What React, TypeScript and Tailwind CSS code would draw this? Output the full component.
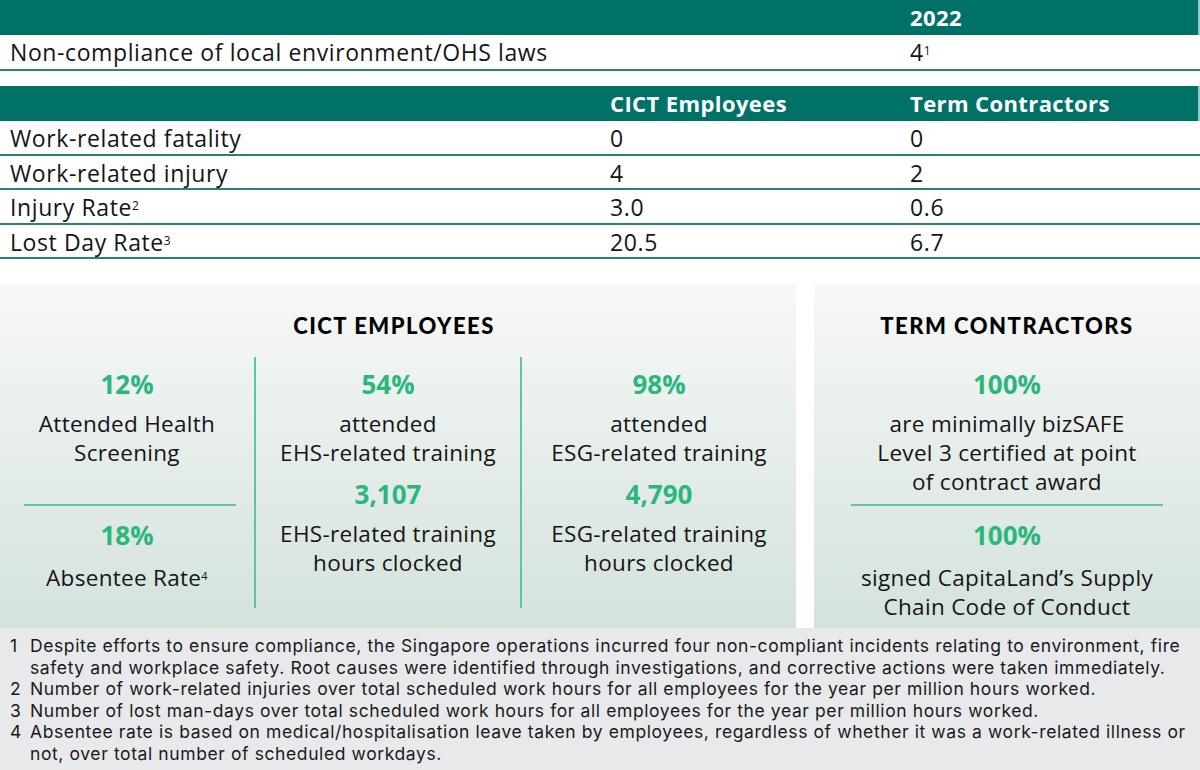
import React from 'react';

const teal = 'bg-[#007167]';

const rows = [
  { label: 'Work-related fatality', sup: '', a: '0', b: '0' },
  { label: 'Work-related injury', sup: '', a: '4', b: '2' },
  { label: 'Injury Rate', sup: '2', a: '3.0', b: '0.6' },
  { label: 'Lost Day Rate', sup: '3', a: '20.5', b: '6.7' },
];

const notes = [
  {
    n: '1',
    t: 'Despite efforts to ensure compliance, the Singapore operations incurred four non-compliant incidents relating to environment, fire safety and workplace safety. Root causes were identified through investigations, and corrective actions were taken immediately.',
  },
  { n: '2', t: 'Number of work-related injuries over total scheduled work hours for all employees for the year per million hours worked.' },
  { n: '3', t: 'Number of lost man-days over total scheduled work hours for all employees for the year per million hours worked.' },
  {
    n: '4',
    t: 'Absentee rate is based on medical/hospitalisation leave taken by employees, regardless of whether it was a work-related illness or not, over total number of scheduled workdays.',
  },
];

const Stat: React.FC<{ value: string; children: React.ReactNode }> = ({ value, children }) => (
  <div className="flex flex-col items-center text-center">
    <div className="text-[26px] leading-[30px] font-bold text-[#2bb77b]">{value}</div>
    <div className="mt-[9.5px] text-[22.5px] leading-[29px] tracking-[0.3px] text-[#151515]">{children}</div>
  </div>
);

const App: React.FC = () => {
  return (
    <div className="w-[1200px] h-[770px] overflow-hidden bg-white text-[#151515] font-['Open_Sans',sans-serif]">
      {/* compliance table */}
      <div className={`grid grid-cols-[600px_300px_1fr] h-[35px] items-center ${teal} text-white font-bold text-[22px] tracking-[0.4px] border-r-2 border-[#9fc6c2]`}>
        <div />
        <div />
        <div className="pl-[10px]">2022</div>
      </div>
      <div className="grid grid-cols-[600px_300px_1fr] h-[36px] items-center text-[23px] tracking-[0.6px] border-b-2 border-[#2b807a]">
        <div className="pl-[10px]">Non-compliance of local environment/OHS laws</div>
        <div />
        <div className="pl-[10px]">
          4<sup className="text-[12px]">1</sup>
        </div>
      </div>

      {/* safety table */}
      <div className={`mt-[15px] grid grid-cols-[600px_300px_1fr] h-[35px] items-center ${teal} text-white font-bold text-[22px] tracking-[0.4px] border-r-2 border-[#9fc6c2]`}>
        <div />
        <div className="pl-[10px]">CICT Employees</div>
        <div className="pl-[10px]">Term Contractors</div>
      </div>
      {rows.map((r) => (
        <div key={r.label} className="grid grid-cols-[600px_300px_1fr] h-[34.5px] items-center text-[23px] tracking-[0.6px] border-b-2 border-[#2b807a]">
          <div className="pl-[10px]">
            {r.label}
            {r.sup && <sup className="text-[12px]">{r.sup}</sup>}
          </div>
          <div className="pl-[10px]">{r.a}</div>
          <div className="pl-[10px]">{r.b}</div>
        </div>
      ))}

      {/* highlight panels */}
      <div className="mt-[24px] flex h-[345px] gap-[18px]">
        <div className="w-[796px] bg-gradient-to-b from-[#f7f8f7] to-[#d4e2dc] pt-[30px]">
          <h3 className="pr-[8px] text-center font-['Lato',sans-serif] font-black text-[22px] leading-[26px] tracking-[1.5px] text-black">CICT EMPLOYEES</h3>
          <div className="mt-[18px] grid grid-cols-[254px_266px_1fr]">
            <div className="flex flex-col">
              <div className="h-[147px] pt-[12px]">
                <Stat value="12%">
                  Attended Health
                  <br />
                  Screening
                </Stat>
              </div>
              <div className="ml-[24px] mr-[18px] h-[2px] bg-[#5fc796]" />
              <div className="pt-[14px]">
                <Stat value="18%">
                  <span className="inline-block mt-[3px]">
                    Absentee Rate<sup className="text-[11px]">4</sup>
                  </span>
                </Stat>
              </div>
            </div>
            <div className="border-l-2 border-[#5fc796] h-[251px] pt-[12px] flex flex-col gap-[12.5px]">
              <Stat value="54%">
                attended
                <br />
                EHS-related training
              </Stat>
              <Stat value="3,107">
                EHS-related training
                <br />
                hours clocked
              </Stat>
            </div>
            <div className="border-l-2 border-[#5fc796] h-[251px] pt-[12px] flex flex-col gap-[12.5px]">
              <Stat value="98%">
                attended
                <br />
                ESG-related training
              </Stat>
              <Stat value="4,790">
                ESG-related training
                <br />
                hours clocked
              </Stat>
            </div>
          </div>
        </div>
        <div className="flex-1 bg-gradient-to-b from-[#f7f8f7] to-[#d4e2dc] pt-[30px]">
          <h3 className="text-center font-['Lato',sans-serif] font-black text-[22px] leading-[26px] tracking-[1.5px] text-black">TERM CONTRACTORS</h3>
          <div className="mt-[30px]">
            <Stat value="100%">
              are minimally bizSAFE
              <br />
              Level 3 certified at point
              <br />
              of contract award
            </Stat>
          </div>
          <div className="mt-[8.5px] ml-[37px] mr-[37px] h-[2px] bg-[#5fc796]" />
          <div className="mt-[14px]">
            <Stat value="100%">
              <span className="inline-block mt-[3px]">
                signed CapitaLand’s Supply
                <br />
                Chain Code of Conduct
              </span>
            </Stat>
          </div>
        </div>
      </div>

      {/* footnotes */}
      <div className="bg-[#e8e9ea] h-[142px] pt-[7px] font-['Inter',sans-serif] text-[17.5px] leading-[21.5px] tracking-[0.6px] text-[#1a1a1a]">
        {notes.map((f) => (
          <div key={f.n} className="flex">
            <div className="w-[30px] pl-[10px] shrink-0">{f.n}</div>
            <div className="pr-[8px]">{f.t}</div>
          </div>
        ))}
      </div>
    </div>
  );
};

export default App;
